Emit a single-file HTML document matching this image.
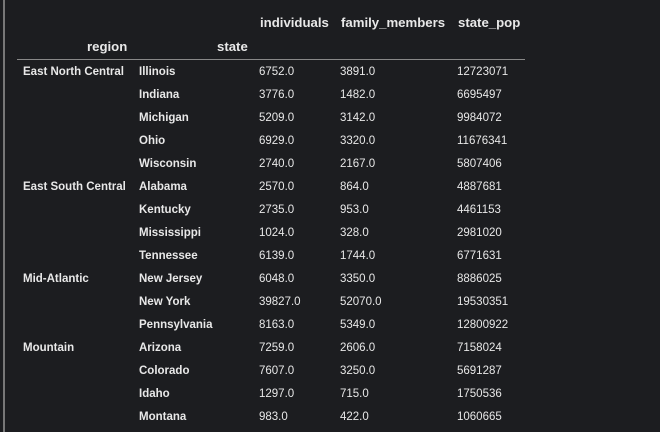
<html><head><style>
body{margin:0;background:#1c1d20;width:660px;height:432px;overflow:hidden;font-family:"Liberation Sans",sans-serif;color:#e8e8e8;position:relative}
.b{position:absolute;left:3px;top:0;width:2px;height:432px;background:#777}
.t{position:absolute;white-space:nowrap;font-size:11.5px}
.h{font-weight:bold;font-size:13.2px}
.l{font-weight:bold}
.line{position:absolute;left:17px;top:59px;width:508px;height:1px;background:#888}
</style></head><body><div class="b"></div><div class="line"></div>
<div class="t h" style="left:260px;top:15px">individuals</div>
<div class="t h" style="left:341px;top:15px">family_members</div>
<div class="t h" style="left:458px;top:15px">state_pop</div>
<div class="t h" style="left:87px;top:39px">region</div>
<div class="t h" style="left:217px;top:39px">state</div>
<div id="r"></div>
<script>
const d=[["East North Central","Illinois","6752.0","3891.0","12723071"],["","Indiana","3776.0","1482.0","6695497"],["","Michigan","5209.0","3142.0","9984072"],["","Ohio","6929.0","3320.0","11676341"],["","Wisconsin","2740.0","2167.0","5807406"],["East South Central","Alabama","2570.0","864.0","4887681"],["","Kentucky","2735.0","953.0","4461153"],["","Mississippi","1024.0","328.0","2981020"],["","Tennessee","6139.0","1744.0","6771631"],["Mid-Atlantic","New Jersey","6048.0","3350.0","8886025"],["","New York","39827.0","52070.0","19530351"],["","Pennsylvania","8163.0","5349.0","12800922"],["Mountain","Arizona","7259.0","2606.0","7158024"],["","Colorado","7607.0","3250.0","5691287"],["","Idaho","1297.0","715.0","1750536"],["","Montana","983.0","422.0","1060665"]];
const xs=[23,139,259,340,457];let h="";
d.forEach((r,i)=>{r.forEach((c,j)=>{h+=`<div class="t${j<2?' l':''}" style="left:${xs[j]}px;top:${65.5+i*23}px">${c}</div>`})});
document.getElementById('r').outerHTML=h;
</script></body></html>
